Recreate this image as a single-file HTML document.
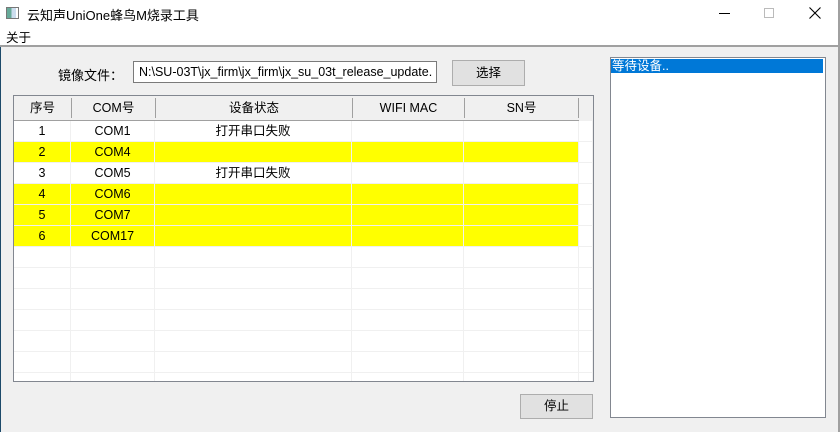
<!DOCTYPE html><html><head><meta charset="utf-8"><style>
*{margin:0;padding:0;box-sizing:border-box}
body{width:840px;height:432px;overflow:hidden;background:#f0f0f0;font:12.5px "Liberation Sans","Noto Sans CJK SC",sans-serif;color:#000;position:relative}
.a{position:absolute}
.t{left:0;top:0;width:840px;height:45px;background:#fff}
.row{position:absolute;left:14px;width:579px;height:21px;border-bottom:1px solid #f0f0f0}
.c{position:absolute;top:0;height:20px;line-height:20px;text-align:center;border-right:1px solid #f0f0f0}
</style></head><body>
<div class="a t"></div>
<div class="a" style="left:6px;top:7px;width:13px;height:12px;border:1px solid #777;background:linear-gradient(90deg,#6a9 0 40%,#cde 40% 80%,#fff 80%)"></div>
<div class="a" style="left:27px;top:5px;font-size:13px">云知声UniOne蜂鸟M烧录工具</div>
<div class="a" style="left:719px;top:13px;width:11px;height:1px;background:#000"></div>
<div class="a" style="left:764px;top:8px;width:10px;height:10px;border:1px solid #bbb"></div>
<svg class="a" style="left:809px;top:7px" width="12" height="12"><path d="M0.5 0.5L11.5 11.5M11.5 0.5L0.5 11.5" stroke="#000" stroke-width="1.1"/></svg>
<div class="a" style="left:6px;top:27px">关于</div>
<div class="a" style="left:0;top:45px;width:840px;height:2px;background:#a0a0a0"></div>
<div class="a" style="left:0;top:47px;width:1px;height:385px;background:#1d4a6a"></div>
<div class="a" style="left:838px;top:0;width:2px;height:432px;background:#a0a0a0"></div>
<div class="a" style="left:58px;top:65px;font-size:13px">镜像文件：</div>
<div class="a" style="left:133px;top:61px;width:304px;height:22px;background:#fff;border:1px solid #7a7a7a;padding-left:5px;line-height:20px;overflow:hidden;white-space:nowrap;font-size:12.5px">N:\SU-03T\jx_firm\jx_firm\jx_su_03t_release_update.</div>
<div class="a" style="left:452px;top:60px;width:73px;height:26px;background:#e1e1e1;border:1px solid #adadad;text-align:center;line-height:24px">选择</div>
<div class="a" style="left:13px;top:95px;width:581px;height:287px;background:#fff;border:1px solid #828790"></div>
<div class="a" style="left:14px;top:96px;width:579px;height:25px;background:#f0f0f0"></div>
<div class="a" style="left:14px;top:120px;width:565px;height:1px;background:#a0a0a0"></div>
<div class="a" style="left:14px;top:96px;height:24px;line-height:24px;width:565px">
<span class="a" style="left:0;width:57px;text-align:center">序号</span>
<span class="a" style="left:57px;width:84px;text-align:center;border-left:1px solid #a0a0a0;height:20px;top:2px;line-height:20px">COM号</span>
<span class="a" style="left:141px;width:197px;text-align:center;border-left:1px solid #a0a0a0;height:20px;top:2px;line-height:20px">设备状态</span>
<span class="a" style="left:338px;width:112px;text-align:center;border-left:1px solid #a0a0a0;height:20px;top:2px;line-height:20px">WIFI MAC</span>
<span class="a" style="left:450px;width:115px;text-align:center;border-left:1px solid #a0a0a0;border-right:1px solid #a0a0a0;height:20px;top:2px;line-height:20px">SN号</span>
</div>
<div id="rows"></div>
<div class="a" style="left:520px;top:394px;width:73px;height:25px;background:#e1e1e1;border:1px solid #adadad;text-align:center;line-height:23px">停止</div>
<div class="a" style="left:610px;top:57px;width:216px;height:361px;background:#fff;border:1px solid #828790"></div>
<div class="a" style="left:611px;top:59px;width:212px;height:14px;background:#0078d7;color:#fff;line-height:14px;padding-left:1px">等待设备..</div>
<script>
var d=[["1","COM1","打开串口失败",0],["2","COM4","",1],["3","COM5","打开串口失败",0],["4","COM6","",1],["5","COM7","",1],["6","COM17","",1]];
var h="";for(var i=0;i<13;i++){var r=d[i]||["","","",0];var y=121+i*21;var bg=r[3]?"#ffff00":"#fff";
h+='<div class="row" style="top:'+y+'px;height:'+(i==12?8:21)+'px;overflow:hidden;'+(i==12?'border-bottom:0':'')+'">';
var cols=[[0,57,r[0]],[57,84,r[1]],[141,197,r[2]],[338,112,""],[450,115,""],[565,14,""]];
cols.forEach(function(c,j){h+='<div class="c" style="left:'+c[0]+'px;width:'+c[1]+'px;background:'+(j<5?bg:"#fff")+'">'+c[2]+'</div>'});
h+='</div>'}document.getElementById("rows").innerHTML=h;
</script>
</body></html>
